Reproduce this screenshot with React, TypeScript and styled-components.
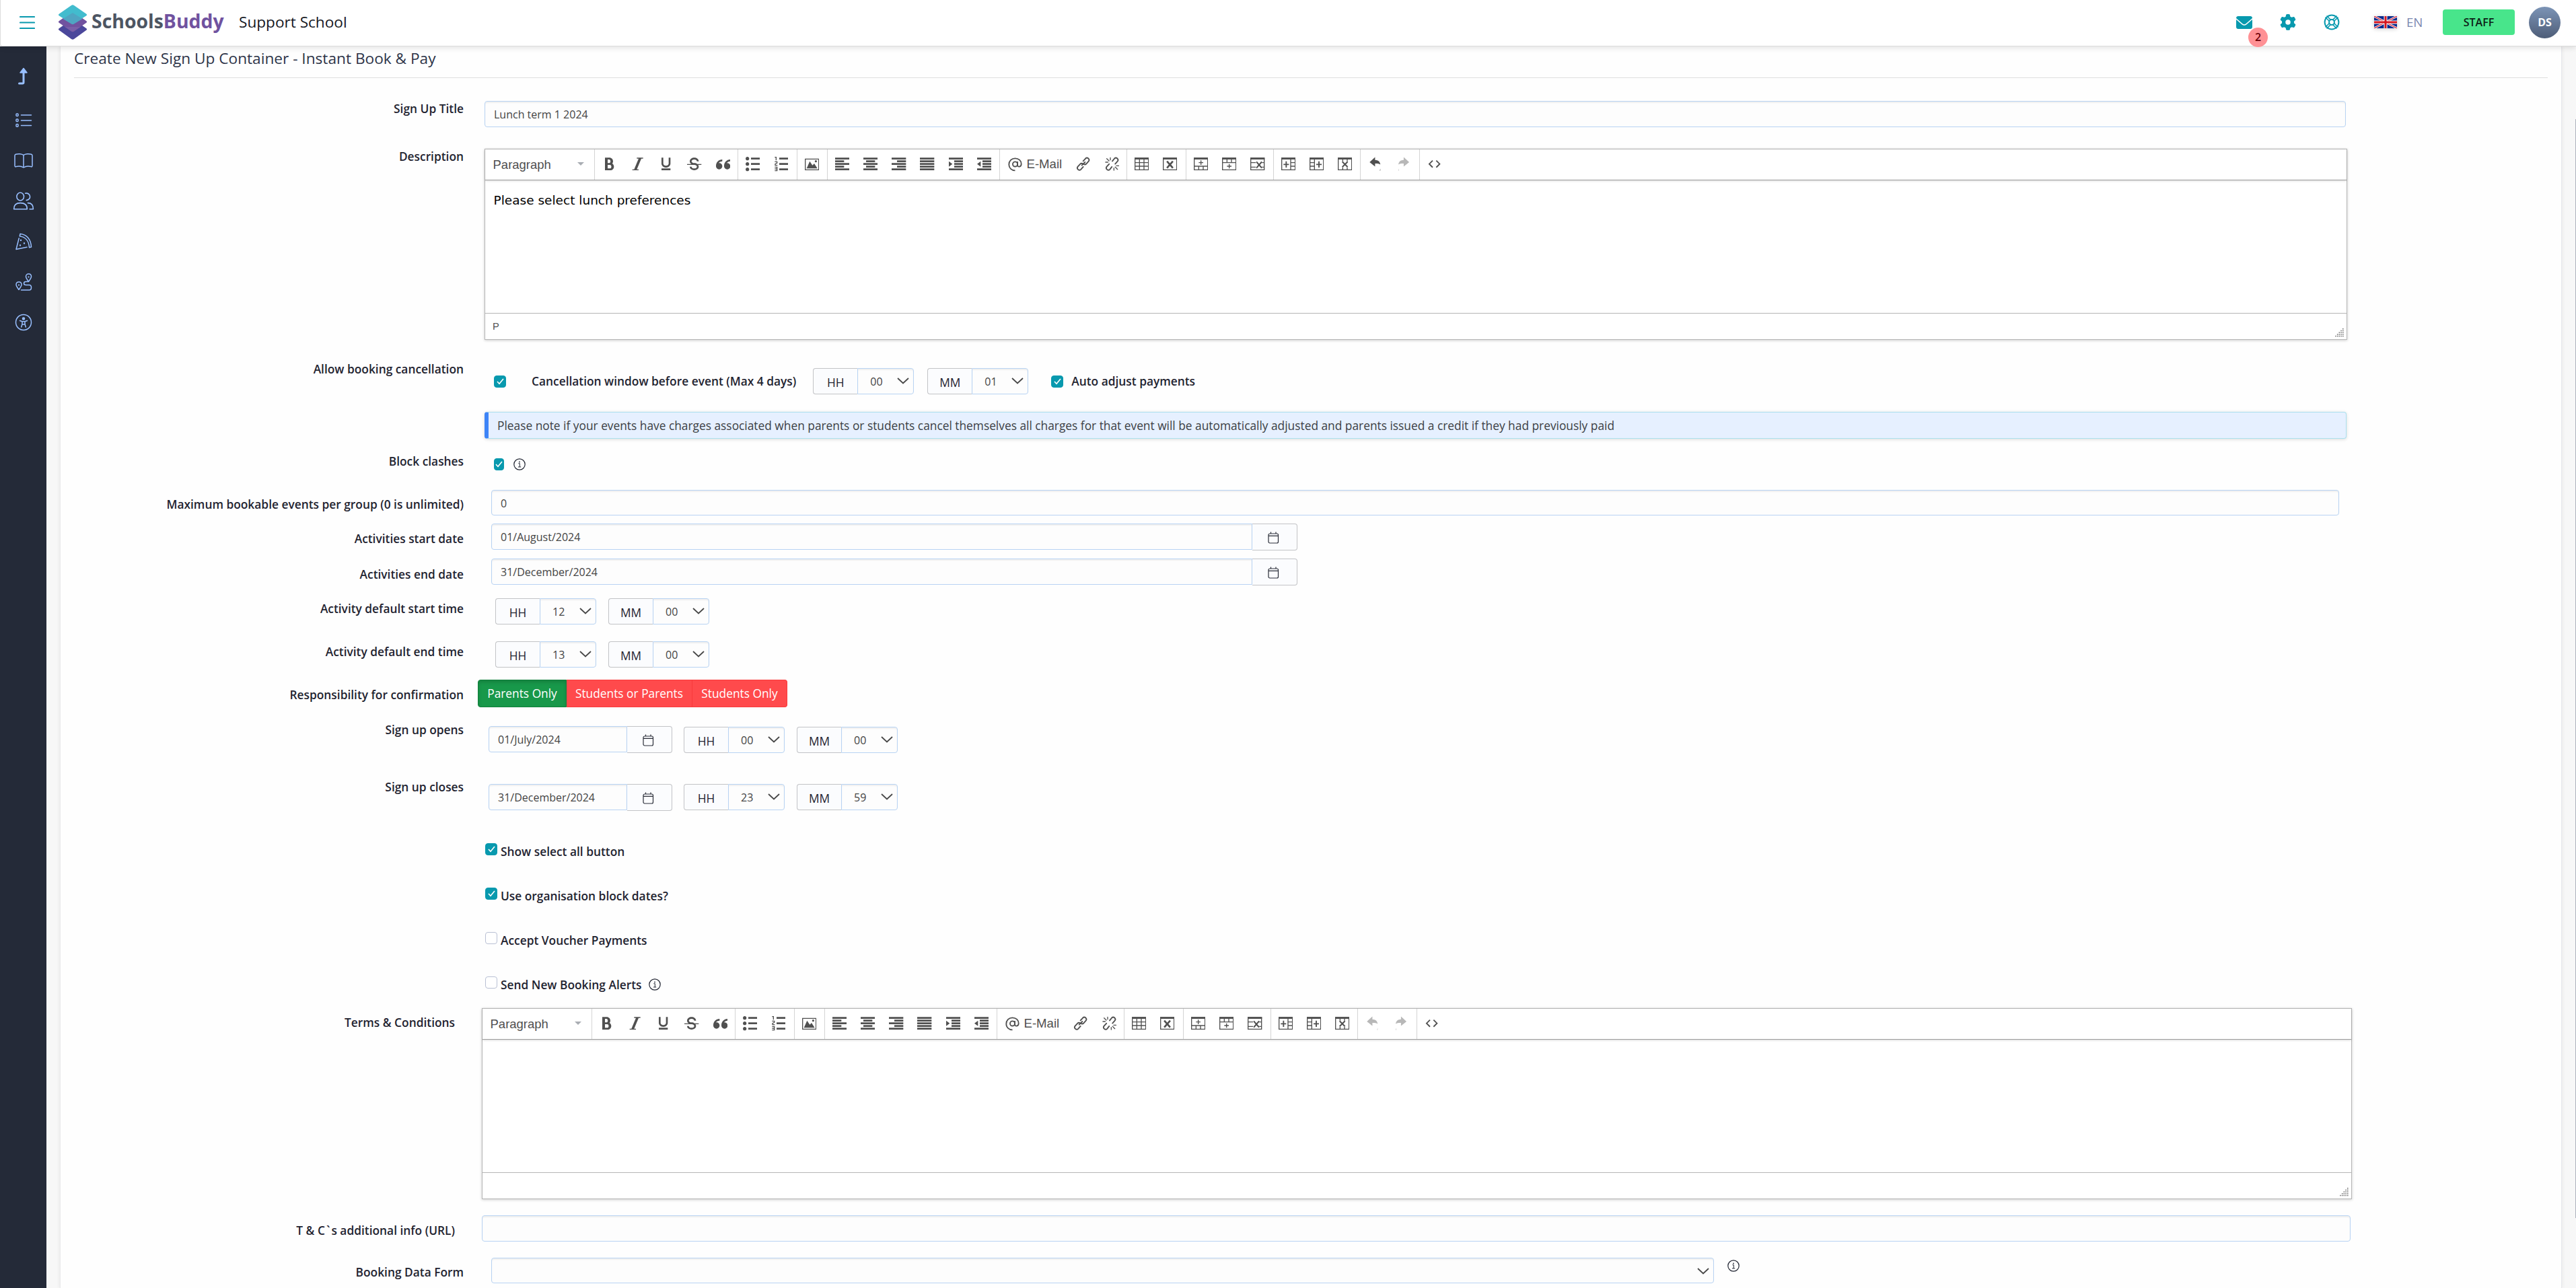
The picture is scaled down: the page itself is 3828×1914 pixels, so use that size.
import React from "react";
import styled, { createGlobalStyle, css } from "styled-components";
import { FaGear } from "react-icons/fa6";
import {
  ImBold,
  ImItalic,
  ImUnderline,
  ImStrikethrough,
  ImQuotesLeft,
  ImListNumbered,
  ImList2,
  ImParagraphLeft,
  ImParagraphCenter,
  ImParagraphRight,
  ImParagraphJustify,
  ImIndentIncrease,
  ImIndentDecrease,
} from "react-icons/im";

const GlobalStyle = createGlobalStyle`
  * {
    box-sizing: border-box;
  }
  body {
    margin: 0;
    background-color: #f7f7f7;
    color: #1f2330;
    font-family: "Open Sans", "Noto Sans", sans-serif;
    font-size: 17.33px;
    line-height: 24px;
    overflow: hidden;
  }
  svg {
    display: block;
    flex: none;
  }
`;

const Page = styled.div`
  width: 100%;
  height: 1914px;
  display: flex;
  flex-direction: column;
  overflow: hidden;
`;

/* ---------- header ---------- */

const Header = styled.header`
  position: relative;
  z-index: 2;
  height: 69px;
  flex: none;
  display: flex;
  align-items: center;
  padding: 0 23px 2px 28px;
  background-color: #fff;
  border-left: 1px solid #dcdcdc;
  border-bottom: 1px solid #dcdcdc;
  border-bottom-left-radius: 4px;
  box-shadow: 0 2px 8px rgba(0, 0, 0, 0.12);
  .logo {
    margin-left: 34px;
  }
`;
const Brand = styled.div`
  margin: -4px 0 0 6px;
  width: 219px;
  font-size: 28.4px;
  line-height: 40px;
  font-weight: 700;
  color: #4d5562;
  white-space: nowrap;
  span {
    color: #70529f;
  }
`;
const SchoolName = styled.div`
  flex: 1;
  font-size: 22.6px;
  line-height: 32px;
  color: #16181f;
`;
const HeaderIcons = styled.div`
  display: flex;
  align-items: center;
  gap: 41px;
  margin-right: 51px;
  color: #0899ae;
`;
const MailButton = styled.div`
  position: relative;
`;
const Badge = styled.span`
  position: absolute;
  left: 18px;
  top: 17px;
  width: 29px;
  height: 29px;
  border-radius: 50%;
  background-color: #ff9195;
  color: #6e0008;
  font-size: 16px;
  font-weight: 600;
  line-height: 28px;
  text-align: center;
`;
const Language = styled.div`
  display: flex;
  align-items: center;
  gap: 14px;
  width: 102px;
  font-size: 18.67px;
  color: #7b88b0;
  svg {
    box-shadow: 0 1px 6px rgba(0, 0, 0, 0.2);
  }
`;
const StaffButton = styled.button`
  width: 107px;
  height: 38px;
  border: 0;
  border-radius: 4px;
  background-color: #48e58b;
  color: #0d1f17;
  font-family: inherit;
  font-size: 16px;
  font-weight: 600;
`;
const Avatar = styled.div`
  width: 47px;
  height: 47px;
  margin-left: 21px;
  border-radius: 50%;
  background: linear-gradient(#7c94b6, #4e5d78);
  color: #fff;
  font-size: 16px;
  font-weight: 700;
  line-height: 47px;
  text-align: center;
`;

/* ---------- shell ---------- */

const Body = styled.div`
  flex: 1;
  display: flex;
  min-height: 0;
`;
const Sidebar = styled.nav`
  width: 69px;
  flex: none;
  display: flex;
  flex-direction: column;
  align-items: center;
  padding-top: 14px;
  background-color: #242a38;
  color: #98bfff;
`;
const SideItem = styled.div<{ $first?: boolean }>`
  height: 60px;
  width: 67px;
  margin-bottom: ${({ $first }) => ($first ? "6px" : "0")};
  display: grid;
  place-items: center;
`;
const Card = styled.main`
  flex: 1;
  margin: 0 21px 0 20px;
  padding: 0 20px 0 20px;
  background-color: #fefefe;
  border-left: 1px solid #e9e9ea;
  border-right: 1px solid #e6e7ec;
  box-shadow: 0 0 6px rgba(0, 0, 0, 0.08);
`;
const Title = styled.h1`
  height: 47px;
  margin: 0;
  padding-top: 2px;
  border-bottom: 1px solid #dfdfdf;
  color: #2d3448;
  font-size: 22.67px;
  font-weight: 400;
  line-height: 32px;
`;
const ScrollThumb = styled.div`
  position: fixed;
  z-index: 3;
  right: 0;
  top: 177px;
  width: 1px;
  height: 1633px;
  background-color: #adb2bc;
`;

/* ---------- form ---------- */

const Row = styled.div<{ $h: number }>`
  display: grid;
  grid-template-columns: 579px 1fr;
  column-gap: 21px;
  height: ${({ $h }) => $h}px;
`;
const Label = styled.label<{ $top: number; $inset?: boolean }>`
  padding-top: ${({ $top }) => $top}px;
  padding-right: ${({ $inset }) => ($inset ? 13 : 0)}px;
  font-weight: 600;
  text-align: right;
  i {
    font-style: normal;
    padding: 0 2px;
  }
`;
const Field = styled.div<{ $top: number; $left: number }>`
  display: flex;
  align-items: flex-start;
  padding-top: ${({ $top }) => $top}px;
  padding-left: ${({ $left }) => $left}px;
`;
const boxBorder = css`
  border: 1px solid #b8d3f3;
  background-color: #fdfdfd;
  box-shadow: inset 0 2px 2px rgba(0, 0, 0, 0.06);
`;
const Input = styled.div<{ $w: number; $h?: number; $joined?: boolean }>`
  ${boxBorder}
  width: ${({ $w }) => $w}px;
  height: ${({ $h }) => $h || 39}px;
  padding: 8px 13px 0;
  border-radius: ${({ $joined }) => ($joined ? "4px 0 0 4px" : "4px")};
  color: #444;
  font-size: 16px;
  line-height: 22px;
`;
const SelectInput = styled(Input)`
  display: flex;
  justify-content: flex-end;
  padding: 14px 6px 0 0;
`;
const CalendarButton = styled.div`
  width: 67px;
  height: 40px;
  padding: 11px 0 0 23px;
  border: 1px solid #c2c3c6;
  border-left: 0;
  border-radius: 0 4px 4px 0;
  background-color: #fbfcfe;
  color: #2a2d38;
`;
const TimeGroup = styled.div<{ $gap?: number; $drop?: number }>`
  display: flex;
  width: 150px;
  height: 39px;
  margin-left: ${({ $gap }) => $gap || 0}px;
  margin-top: ${({ $drop }) => $drop || 0}px;
`;
const TimeAddon = styled.span`
  width: 66px;
  padding-top: 8px;
  border: 1px solid #c2c3c6;
  border-right: 0;
  border-radius: 4px 0 0 4px;
  background-color: #fbfcfe;
  text-align: center;
`;
const TimeSelect = styled.div`
  ${boxBorder}
  flex: 1;
  display: flex;
  justify-content: space-between;
  padding: 8px 6px 0 18px;
  border-radius: 0 4px 4px 0;
  color: #444;
  font-size: 16px;
  line-height: 22px;
  svg {
    margin-top: 5px;
  }
`;
const CheckBox = styled.span<{ $on?: boolean; $w?: number; $gap?: number }>`
  width: ${({ $w }) => $w || 18}px;
  height: 18px;
  flex: none;
  display: grid;
  place-items: center;
  margin-left: ${({ $gap }) => $gap || 0}px;
  border: 1px solid ${({ $on }) => ($on ? "#0899ae" : "#b9c0d4")};
  border-radius: 4px;
  background-color: ${({ $on }) => ($on ? "#0899ae" : "#fff")};
`;
const CheckText = styled.span<{ $gap: number }>`
  margin-left: ${({ $gap }) => $gap}px;
  font-weight: 600;
  white-space: nowrap;
`;
const InfoMark = styled.span<{ $gap: number; $drop?: number }>`
  margin-left: ${({ $gap }) => $gap}px;
  margin-top: ${({ $drop }) => $drop || 0}px;
  color: #1f2330;
`;
const CancelField = styled.div`
  padding: 17px 0 0 10px;
`;
const CancelLine = styled.div`
  display: flex;
  align-items: center;
  height: 39px;
  padding-left: 14px;
  ${CheckText} {
    margin-top: -1px;
  }
`;
const Alert = styled.div`
  width: 2767px;
  height: 40px;
  margin-top: 26px;
  padding: 7px 13px 0;
  border: 1px solid #abe0ee;
  border-left: 6px solid #3d84f7;
  border-radius: 4px;
  background-color: #e6f0ff;
  box-shadow: 0 1px 5px rgba(0, 0, 0, 0.15);
  color: #3c4044;
`;
const ToggleGroup = styled.div`
  display: flex;
  height: 41px;
`;
const Toggle = styled.button<{ $w: number; $active?: boolean }>`
  width: ${({ $w }) => $w}px;
  padding: 0 0 1px;
  border: 1px solid ${({ $active }) => ($active ? "#10803b" : "#f93a3c")};
  border-left-width: ${({ $active }) => ($active ? 1 : 0)}px;
  background-color: ${({ $active }) => ($active ? "#18984a" : "#ff4a4c")};
  box-shadow: ${({ $active }) => ($active ? "inset 0 3px 5px rgba(0,0,0,.15)" : "none")};
  color: #fff;
  font-family: inherit;
  font-size: 17.33px;
  &:first-child {
    border-radius: 4px 0 0 4px;
  }
  &:last-child {
    border-radius: 0 4px 4px 0;
  }
`;

/* ---------- rich text editor ---------- */

const EditorBox = styled.div<{ $w: number }>`
  width: ${({ $w }) => $w}px;
  height: 284px;
  display: flex;
  flex-direction: column;
  border: 1px solid #b5b5b5;
  background-color: #fff;
  box-shadow: 0 1px 4px rgba(0, 0, 0, 0.2);
  color: #505050;
  font-family: "Liberation Sans", Arial, sans-serif;
`;
const EditorBar = styled.div`
  position: relative;
  display: flex;
  height: 46px;
  flex: none;
  border-bottom: 1px solid #9c9c9c;
  box-shadow: 0 1px 3px rgba(0, 0, 0, 0.15);
`;
const BarGroup = styled.div<{ $w: number }>`
  display: flex;
  width: ${({ $w }) => $w}px;
  padding-left: 0.5px;
  border-left: 1px solid #d4d4d4;
  &:first-child {
    border-left: 0;
  }
`;
const BarButton = styled.div<{ $dim?: boolean }>`
  display: flex;
  align-items: center;
  justify-content: center;
  width: 42.2px;
  height: 44px;
  opacity: ${({ $dim }) => ($dim ? 0.4 : 1)};
`;
const FormatSelect = styled.div`
  display: flex;
  flex: 1;
  align-items: center;
  justify-content: space-between;
  padding: 0 15px 0 11px;
  font-size: 18.5px;
  &::after {
    content: "";
    margin-top: -3px;
    border: 5px solid transparent;
    border-top-color: #a9adb3;
    border-bottom: 0;
  }
`;
const MailLink = styled.div`
  display: flex;
  align-items: center;
  gap: 6px;
  width: 102.5px;
  height: 44px;
  padding-left: 12px;
  font-size: 18.6px;
`;
const EditorText = styled.div`
  flex: 1;
  padding: 18px 12.5px;
  color: #000;
  font-family: "DejaVu Sans", Verdana, sans-serif;
  font-size: 18.5px;
`;
const EditorStatus = styled.div`
  display: flex;
  justify-content: space-between;
  align-items: flex-end;
  height: 39px;
  padding: 0 4px 3px 11px;
  border-top: 1px solid #b5b5b5;
  font-size: 14.7px;
  span {
    padding-bottom: 4px;
  }
`;

/* ---------- icons ---------- */

const S = 21.33;

const GridIcon = ({ d, children }: any) => (
  <svg width={S} height={S} viewBox="0 0 16 16" fill="none" stroke="currentColor" strokeWidth="1">
    {d && <path d={d} />}
    {children}
  </svg>
);
const Frame = "M.5 1.5h15v13H.5z";
const TopBar = <path d="M0 1h16v2H0z" fill="currentColor" stroke="none" />;

const ImageIcon = () => (
  <GridIcon d="M.5 2.5h15v12H.5z">
    <path d="M2 13l3.5-8 3 4.5 2-2L14 13z" fill="currentColor" stroke="none" />
    <circle cx="12.3" cy="5" r="1.2" fill="currentColor" stroke="none" />
  </GridIcon>
);
const AtIcon = () => (
  <svg width={21} height={21} viewBox="0 0 16 16" fill="none" stroke="currentColor" strokeWidth="1.4">
    <circle cx="8" cy="7.6" r="2.7" />
    <path d="M10.7 4.6v4.2c0 2.6 4.3 2 4.3-1.4C15 3.6 12 1 8 1S1 4 1 8c0 4 3 6.8 7 6.8" />
  </svg>
);
const LinkIcon = () => (
  <GridIcon>
    <g strokeWidth="1.4" strokeLinecap="round">
      <path d="M6.5 9.5L10 6M8 4.8l2.6-2.9c2-2 5.2.8 3.4 3.1l-2.6 2.900c-.9.9-2 .9-2.9.3" />
      <path d="M8 11.2l-2.6 2.900c-2 2-5.2-.8-3.4-3.1l2.6-2.9c.9-.9 2-.9 2.9-.3" />
    </g>
  </GridIcon>
);
const UnlinkIcon = () => (
  <GridIcon>
    <g strokeWidth="1.4" strokeLinecap="round">
      <path d="M8.3 4.8l2.3-2.9c2-2 5.2.8 3.4 3.1l-2.6 2.9" />
      <path d="M7.7 11.2l-2.3 2.9c-2 2-5.2-.8-3.4-3.1l2.6-2.9" />
      <path d="M6 1v2.5M2 2l2.5 2.5M.7 6h2.6M10 15v-2.5M14 14l-2.5-2.5M15.3 10h-2.6" strokeWidth="1" />
    </g>
  </GridIcon>
);
const TableIcon = () => <GridIcon d={Frame + "M5.5 3v12M10.5 3v12M0 6.5h16M0 10.5h16"}>{TopBar}</GridIcon>;
const TableDeleteIcon = () => (
  <GridIcon d={Frame}>
    {TopBar}
    <path d="M4.6 5l6.6 7.5M11.2 5l-6.6 7.5" strokeWidth="2" />
  </GridIcon>
);
const RowBeforeIcon = () => (
  <GridIcon d={Frame + "M0 10.5h16M5.5 11v4M10.5 11v4M8 4v5M5.5 6.5h5"}>{TopBar}</GridIcon>
);
const RowAfterIcon = () => (
  <GridIcon d={Frame + "M0 6.5h16M5.5 2v4M10.5 2v4M8 8v5M5.5 10.5h5"}>{TopBar}</GridIcon>
);
const RowDeleteIcon = () => (
  <GridIcon d={Frame + "M0 6.5h6M0 11.5h6M13 6.5h3M13 11.5h3"}>
    {TopBar}
    <path d="M6.8 5.5l6 7M12.8 5.5l-6 7" strokeWidth="1.6" />
  </GridIcon>
);
const ColBeforeIcon = () => (
  <GridIcon d={Frame + "M10.5 2v13M11 6.5h5M11 10.5h5"}>
    {TopBar}
    <path d="M5.5 5v7M2.5 8.5h6" strokeWidth="1.4" />
  </GridIcon>
);
const ColAfterIcon = () => (
  <GridIcon d={Frame + "M5.5 2v13M0 6.5h5M0 10.5h5"}>
    {TopBar}
    <path d="M10.5 5v7M7.5 8.5h6" strokeWidth="1.4" />
  </GridIcon>
);
const ColDeleteIcon = () => (
  <GridIcon d={Frame + "M5.5 2v3M10.5 2v3M5.5 12v3M10.5 12v3"}>
    {TopBar}
    <path d="M5 5.5l6 6M11 5.5l-6 6" strokeWidth="1.5" />
  </GridIcon>
);
const UndoIcon = ({ flip }: { flip?: boolean }) => (
  <svg width={S} height={S} viewBox="0 0 16 16" fill="currentColor">
    <g transform={flip ? "matrix(-1 0 0 1 16 0)" : undefined}>
      <path d="M7.8.3v3.2c3.4.2 5.6 1.700 5.9 5.200-1.500-1-3.300-1.300-5.900-1.200v3.300L1.700 6z" />
      <path d="M13.700 13.200v2.200h-.7z" />
    </g>
  </svg>
);
const CodeIcon = () => <GridIcon><path d="M6 4.2L2.2 8 6 11.8M10 4.2L13.8 8 10 11.8" strokeWidth="1.4" /></GridIcon>;

const ResizeGrip = () => (
  <svg width="13" height="14" viewBox="0 0 13 14" fill="#6a6a6a">
    {[0, 1, 2, 3, 4].map((r) =>
      Array.from({ length: r + 1 }, (_, c) => (
        <rect key={`${r}-${c}`} x={11 - c * 2.7} y={1 + r * 2.7} width="1.5" height="1.5" />
      ))
    )}
  </svg>
);
const Chevron = () => (
  <svg width="18" height="10" viewBox="0 0 18 10" fill="none" stroke="#484848" strokeWidth="1.8">
    <path d="M1 1l8 7.5L17 1" />
  </svg>
);
const Check = () => (
  <svg width="11" height="10" viewBox="0 0 11 10" fill="none" stroke="#fff" strokeWidth="1.6">
    <path d="M1 5l3 3.3L10 1" />
  </svg>
);
const Info = () => (
  <svg width="18" height="18" viewBox="0 0 18 18" fill="none" stroke="currentColor" strokeWidth="1.2">
    <circle cx="9" cy="9" r="8.2" />
    <path d="M7.4 7.7h1.900v5M7 12.9h4.2" strokeWidth="1" />
    <circle cx="9" cy="5.4" r=".9" fill="currentColor" stroke="none" />
  </svg>
);
const Calendar = () => (
  <svg width="17" height="18" viewBox="0 0 17 18" fill="none" stroke="currentColor" strokeWidth="1.2">
    <rect x="1" y="3" width="14.5" height="14" rx="2" />
    <path d="M1 6.3h14.5M4.5.5V3M12 .5V3" />
  </svg>
);
const Logo = () => (
  <svg className="logo" width="44" height="52" viewBox="0 0 44 52">
    <path d="M22 21l20 14c1.500 1 1.500 2 0 3L24 51c-1.500 1-2.500 1-4 0L2 38c-1.500-1-1.500-2 0-3z" fill="#4b479b" />
    <path d="M22 10l20 14c1.500 1 1.500 2 0 3L24 39.500c-1.500 1-2.500 1-4 0L2 27c-1.500-1-1.500-2 0-3z" fill="#71529f" />
    <path d="M24 1l18 12.500c1.500 1 1.500 2 0 3L24 28c-1.500 1-2.500 1-4 0L2 16.500c-1.500-1-1.500-2 0-3L20 1c1.500-1 2.500-1 4 0z" fill="#42bcce" />
    <path d="M22 12l14.500 9L24 28.500c-1.500 1-2.500 1-4 0L7.500 21z" fill="#4fa5c2" />
    <path d="M10.500 33l9.500 6.500c1.500 1 2.500 1 4 0l9.500-6.500" fill="#7a5fa8" />
  </svg>
);
const Burger = () => (
  <svg width="23" height="21" viewBox="0 0 23 21" stroke="#0899ae" strokeWidth="2.2" strokeLinecap="round">
    <path d="M1 2h21M1 10.500h21M1 19h21" />
  </svg>
);
const Mail = () => (
  <svg width="24" height="19" viewBox="0 0 24 19" fill="currentColor">
    <path d="M3 0h18c1.700 0 3 1.300 3 3l-9.800 8.400c-1.300 1.100-3.100 1.100-4.400 0L0 3c0-1.700 1.300-3 3-3z" />
    <path d="M0 5l9 7.700c1.700 1.500 4.300 1.500 6 0L24 5v11c0 1.700-1.300 3-3 3H3c-1.700 0-3-1.300-3-3z" />
  </svg>
);
const LifeRing = () => (
  <svg width="24" height="24" viewBox="0 0 24 24" fill="none" stroke="currentColor" strokeWidth="2">
    <circle cx="12" cy="12" r="10.4" />
    <circle cx="12" cy="12" r="3.9" />
    <path d="M2.500 4.500l6 6M4.500 2.500l6 6M21.500 4.500l-6 6M19.500 2.500l-6 6M2.500 19.500l6-6M4.500 21.500l6-6M21.500 19.500l-6-6M19.500 21.500l-6-6" strokeWidth="1.6" />
  </svg>
);
const Flag = () => (
  <svg width="34" height="18" viewBox="0 0 34 18">
    <path d="M0 0h34v18H0z" fill="#0a2a8c" />
    <path d="M0 0l34 18M34 0L0 18" stroke="#fff" strokeWidth="3" />
    <path d="M0 0l34 18M34 0L0 18" stroke="#d4142b" strokeWidth="1.2" />
    <path d="M17 0v18M0 9h34" stroke="#fff" strokeWidth="5" />
    <path d="M17 0v18M0 9h34" stroke="#d4141e" strokeWidth="3" />
  </svg>
);

const SideSvg = ({ children, w = 30 }: any) => (
  <svg width={w} height={w} viewBox="0 0 30 30" fill="none" stroke="currentColor" strokeWidth="1.5" strokeLinecap="round" strokeLinejoin="round">
    {children}
  </svg>
);
const sideIcons = [
  <SideSvg>
    <path d="M15 8v16.500c0 1-.8 1.500-1.600 1.500H8.500" strokeWidth="3" />
    <path d="M15 3.500l5 6.500H10z" fill="currentColor" />
  </SideSvg>,
  <SideSvg>
    <rect x="4" y="5" width="3" height="3.6" rx="1" />
    <rect x="4" y="13" width="3" height="3.6" rx="1" />
    <rect x="4" y="20.6" width="3" height="3.6" rx="1" />
    <path d="M11.500 7h15M11.500 15h15M11.500 22.500h15" />
  </SideSvg>,
  <SideSvg>
    <path d="M15 6.500C12.500 4.600 7 4.300 3.500 5.200c-1 .3-1.500 1-1.500 2V22c0 1.600.7 2 2 1.600 3.500-.9 8-.6 11 1.400 3-2 7.500-2.300 11-1.400 1.300.4 2 0 2-1.600V7.200c0-1-.5-1.700-1.500-2C23 4.300 17.500 4.600 15 6.500zM15 6.500V25" />
  </SideSvg>,
  <SideSvg w={32}>
    <ellipse cx="10.5" cy="8.5" rx="5" ry="5.5" />
    <path d="M1.500 26c0-6 3-8.500 9-8.500s9.500 2.500 9.500 8.500zM17.500 4c7-1.500 9.500 8.500 1.500 9.700M21 17.500c5 0 7.500 3 7.500 8.500h-5" />
  </SideSvg>,
  <SideSvg>
    <path d="M10 3.500c10 1 16 8.500 16.500 19.500l-3 .8C23 14.500 18 8 9.300 7zM8.200 10L4 26.500l16-3.200" />
    <path d="M11 13v.1M10 20.500v.1M16 17.500v.1" strokeWidth="2.4" />
  </SideSvg>,
  <SideSvg>
    <path d="M22.500 14.500c-2.500-3.500-4-5.500-4-7.500 0-5.300 8-5.300 8 0 0 2-1.500 4-4 7.500zM8 26.500c-2.500-3.500-4-5.500-4-7.500 0-5.300 8-5.300 8 0 0 2-1.500 4-4 7.500zM11.500 27h12c4 0 4-7.500 0-7.500h-5c-4 0-4-5 0-5h4" />
    <path d="M22.500 7.500v.1M8 19.500v.1" strokeWidth="2.2" />
  </SideSvg>,
  <SideSvg>
    <circle cx="15" cy="15" r="11.5" />
    <circle cx="15" cy="9.5" r="1.5" fill="currentColor" />
    <path d="M9.500 12.500l3.500 1.300v4l-1.300 4.200M20.500 12.500L17 13.800v4l1.300 4.200M13 13.800h4M13 18h4" />
  </SideSvg>,
];

/* ---------- parts ---------- */

interface IToolGroup {
  w: number;
  icons: React.ReactNode[];
}
const tools: IToolGroup[] = [
  {
    w: 212.7,
    icons: [<ImBold size={S} />, <ImItalic size={S} />, <ImUnderline size={S} />, <ImStrikethrough size={S} />, <ImQuotesLeft size={S} />],
  },
  { w: 88.3, icons: [<ImList2 size={S} />, <ImListNumbered size={S} />] },
  { w: 45, icons: [<ImageIcon />] },
  {
    w: 256,
    icons: [
      <ImParagraphLeft size={S} />,
      <ImParagraphCenter size={S} />,
      <ImParagraphRight size={S} />,
      <ImParagraphJustify size={S} />,
      <ImIndentIncrease size={S} />,
      <ImIndentDecrease size={S} />,
    ],
  },
];
const tableTools: IToolGroup[] = [
  { w: 87.9, icons: [<TableIcon />, <TableDeleteIcon />] },
  { w: 129.9, icons: [<RowBeforeIcon />, <RowAfterIcon />, <RowDeleteIcon />] },
  { w: 128.9, icons: [<ColBeforeIcon />, <ColAfterIcon />, <ColDeleteIcon />] },
];

interface IEditor {
  width: number;
  text?: string;
  path?: string;
  canUndo?: boolean;
}
function Editor({ width, text, path, canUndo }: IEditor) {
  const renderGroup = (group: IToolGroup, key: number) => (
    <BarGroup key={key} $w={group.w}>
      {group.icons.map((icon, i) => (
        <BarButton key={i}>{icon}</BarButton>
      ))}
    </BarGroup>
  );
  return (
    <EditorBox $w={width}>
      <EditorBar>
        <BarGroup $w={162}>
          <FormatSelect>Paragraph</FormatSelect>
        </BarGroup>
        {tools.map(renderGroup)}
        <BarGroup $w={189}>
          <MailLink>
            <AtIcon />
            E-Mail
          </MailLink>
          <BarButton><LinkIcon /></BarButton>
          <BarButton><UnlinkIcon /></BarButton>
        </BarGroup>
        {tableTools.map(renderGroup)}
        <BarGroup $w={88.2}>
          <BarButton $dim={!canUndo}><UndoIcon /></BarButton>
          <BarButton $dim><UndoIcon flip /></BarButton>
        </BarGroup>
        <BarGroup $w={45}>
          <BarButton><CodeIcon /></BarButton>
        </BarGroup>
      </EditorBar>
      <EditorText>{text}</EditorText>
      <EditorStatus>
        <span>{path}</span>
        <ResizeGrip />
      </EditorStatus>
    </EditorBox>
  );
}

interface ITime {
  unit: string;
  value: string;
  gap?: number;
  drop?: number;
}
function Time({ unit, value, gap, drop }: ITime) {
  return (
    <TimeGroup $gap={gap} $drop={drop}>
      <TimeAddon>{unit}</TimeAddon>
      <TimeSelect>
        {value}
        <Chevron />
      </TimeSelect>
    </TimeGroup>
  );
}

function DateInput({ value, width }: { value: string; width: number }) {
  return (
    <>
      <Input $w={width} $joined>{value}</Input>
      <CalendarButton>
        <Calendar />
      </CalendarButton>
    </>
  );
}

const options = [
  { label: "Show select all button", on: true, h: 66 },
  { label: "Use organisation block dates?", on: true, h: 66 },
  { label: "Accept Voucher Payments", on: false, h: 66 },
  { label: "Send New Booking Alerts", on: false, h: 44, info: true },
];

function App() {
  return (
    <Page>
      <GlobalStyle />
      <Header>
        <Burger />
        <Logo />
        <Brand>
          Schools<span>Buddy</span>
        </Brand>
        <SchoolName>Support School</SchoolName>
        <HeaderIcons>
          <MailButton>
            <Mail />
            <Badge>2</Badge>
          </MailButton>
          <FaGear size={24} />
          <LifeRing />
        </HeaderIcons>
        <Language>
          <Flag />
          EN
        </Language>
        <StaffButton>STAFF</StaffButton>
        <Avatar>DS</Avatar>
      </Header>
      <Body>
        <Sidebar>
          {sideIcons.map((icon, i) => (
            <SideItem key={i} $first={i === 0}>{icon}</SideItem>
          ))}
        </Sidebar>
        <Card>
          <Title>Create New Sign Up Container - Instant Book &amp; Pay</Title>

          <Row $h={90}>
            <Label $top={33}>Sign Up Title</Label>
            <Field $top={34} $left={10}>
              <Input $w={2766}>Lunch term 1 2024</Input>
            </Field>
          </Row>
          <Row $h={324}>
            <Label $top={14}>Description</Label>
            <Field $top={15} $left={10}>
              <Editor width={2768} text="Please select lunch preferences" path="P" canUndo />
            </Field>
          </Row>
          <Row $h={140}>
            <Label $top={6}>Allow booking cancellation</Label>
            <CancelField>
              <CancelLine>
                <CheckBox $on><Check /></CheckBox>
                <CheckText $gap={38}>Cancellation window before event (Max 4 days)</CheckText>
                <Time unit="HH" value="00" gap={25} />
                <Time unit="MM" value="01" gap={20} />
                <CheckBox $on $gap={34}><Check /></CheckBox>
                <CheckText $gap={12}>Auto adjust payments</CheckText>
              </CancelLine>
              <Alert>
                Please note if your events have charges associated when parents or students cancel themselves all charges for that event will be
                automatically adjusted and parents issued a credit if they had previously paid
              </Alert>
            </CancelField>
          </Row>
          <Row $h={52}>
            <Label $top={3}>Block clashes</Label>
            <Field $top={11} $left={24}>
              <CheckBox $on $w={15}><Check /></CheckBox>
              <InfoMark $gap={14}><Info /></InfoMark>
            </Field>
          </Row>
          <Row $h={48}>
            <Label $top={15}>Maximum bookable events per group (0 is unlimited)</Label>
            <Field $top={6} $left={20}>
              <Input $w={2746} $h={38}>0</Input>
            </Field>
          </Row>
          <Row $h={52}>
            <Label $top={18}>Activities start date</Label>
            <Field $top={8} $left={20}>
              <DateInput value="01/August/2024" width={1131} />
            </Field>
          </Row>
          <Row $h={53}>
            <Label $top={19}>Activities end date</Label>
            <Field $top={8} $left={20}>
              <DateInput value="31/December/2024" width={1131} />
            </Field>
          </Row>
          <Row $h={65}>
            <Label $top={17}>Activity default start time</Label>
            <Field $top={14} $left={26}>
              <Time unit="HH" value="12" />
              <Time unit="MM" value="00" gap={18} />
            </Field>
          </Row>
          <Row $h={64}>
            <Label $top={16}>Activity default end time</Label>
            <Field $top={13} $left={26}>
              <Time unit="HH" value="13" />
              <Time unit="MM" value="00" gap={18} />
            </Field>
          </Row>
          <Row $h={58}>
            <Label $top={16}>Responsibility for confirmation</Label>
            <Field $top={6} $left={0}>
              <ToggleGroup>
                <Toggle $w={132} $active>Parents Only</Toggle>
                <Toggle $w={187}>Students or Parents</Toggle>
                <Toggle $w={141}>Students Only</Toggle>
              </ToggleGroup>
            </Field>
          </Row>
          <Row $h={88}>
            <Label $top={10}>Sign up opens</Label>
            <Field $top={17} $left={16}>
              <DateInput value="01/July/2024" width={206} />
              <Time unit="HH" value="00" gap={17} drop={1} />
              <Time unit="MM" value="00" gap={18} drop={1} />
            </Field>
          </Row>
          <Row $h={103}>
            <Label $top={7}>Sign up closes</Label>
            <Field $top={15} $left={16}>
              <DateInput value="31/December/2024" width={206} />
              <Time unit="HH" value="23" gap={17} />
              <Time unit="MM" value="59" gap={18} />
            </Field>
          </Row>
          {options.map((o) => (
            <Row key={o.label} $h={o.h}>
              <span />
              <Field $top={0} $left={11}>
                <CheckBox $on={o.on}>{o.on && <Check />}</CheckBox>
                <CheckText $gap={5}>{o.label}</CheckText>
                {o.info && <InfoMark $gap={11} $drop={3}><Info /></InfoMark>}
              </Field>
            </Row>
          ))}
          <Row $h={303}>
            <Label $top={12} $inset>Terms &amp; Conditions</Label>
            <Field $top={3} $left={6}>
              <Editor width={2779} />
            </Field>
          </Row>
          <Row $h={63}>
            <Label $top={18} $inset>
              T &amp; C<i>`</i>s additional info (URL)
            </Label>
            <Field $top={8} $left={6}>
              <Input $w={2777} />
            </Field>
          </Row>
          <Row $h={53}>
            <Label $top={17}>Booking Data Form</Label>
            <Field $top={8} $left={20}>
              <SelectInput $w={1817} $h={38}>
                <Chevron />
              </SelectInput>
              <InfoMark $gap={20} $drop={3}><Info /></InfoMark>
            </Field>
          </Row>
        </Card>
      </Body>
      <ScrollThumb />
    </Page>
  );
}

export default App;
